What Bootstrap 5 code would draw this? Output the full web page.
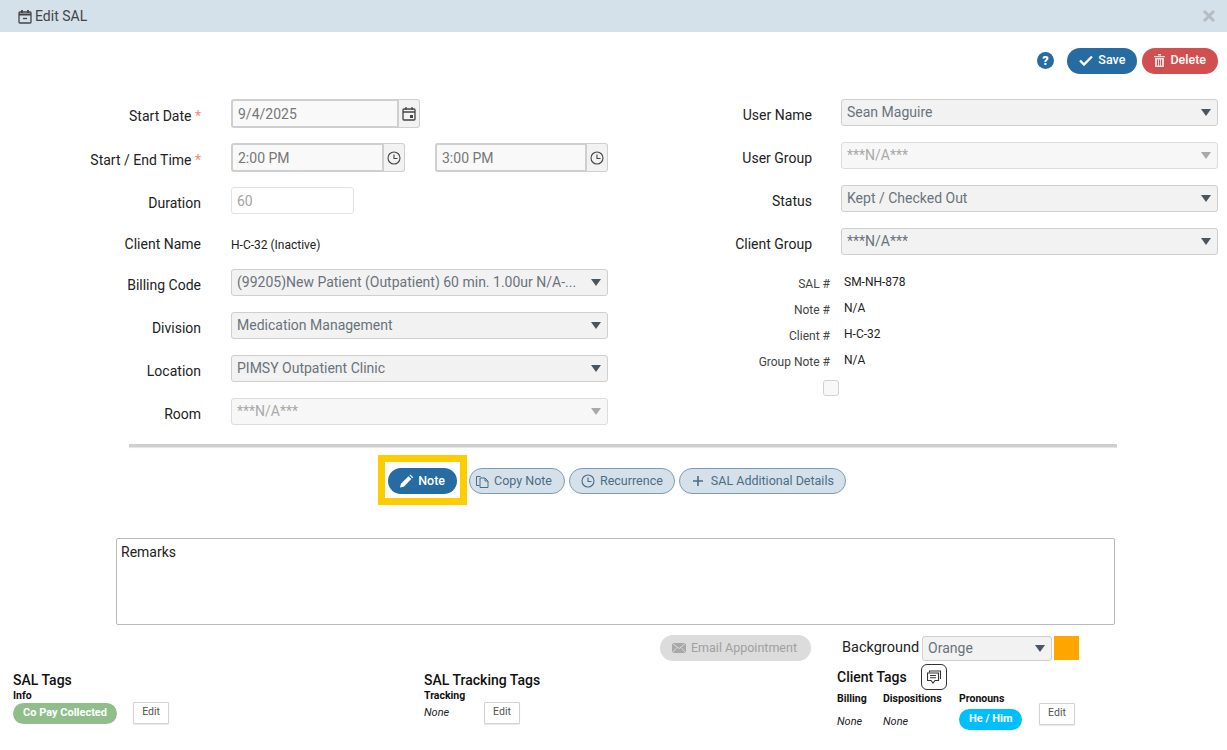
<!DOCTYPE html>
<html lang="en">
  <head>
    <meta charset="UTF-8" />
    <title>Edit SAL</title>
    <link href="https://cdn.jsdelivr.net/npm/bootstrap@5.3.0/dist/css/bootstrap.min.css" rel="stylesheet" />
    <script src="https://cdn.jsdelivr.net/npm/bootstrap@5.3.0/dist/js/bootstrap.bundle.min.js"></script>
    <style>
      body {
        font-family: Roboto, "Liberation Sans", sans-serif;
        font-size: 14px;
        color: #222;
        background: #fff;
        height: 750px;
        overflow: hidden;
      }
      .title-bar {
        height: 32px;
        background: #d4e1ea;
        padding: 0 9px 0 18px;
        color: #444;
        font-size: 14px;
      }
      .title-bar svg { margin-right: 3px; }
      .close-x { color: #b4bcc2; font-size: 0; }
      .tool-bar {
        height: 27px;
        margin-top: 15px;
        padding-right: 9px;
        gap: 5px;
      }
      .pill-btn {
        border-radius: 14px;
        height: 26px;
        padding: 0 11px;
        font-size: 12.5px;
        font-weight: 500;
        border: 1px solid transparent;
        display: inline-flex;
        align-items: center;
        gap: 5px;
        white-space: nowrap;
        line-height: 1;
      }
      .pill-blue { background: #266ba2; color: #fff; }
      .pill-red { background: #d24f4f; color: #fff; }
      .pill-soft { background: #d4e1ea; color: #4c6c85; border-color: #7c9db8; font-weight: 400; }
      .pill-off { background: #dcdcdc; color: #a0a0a0; font-weight: 400; }
      .form-area { margin-top: 25px; height: 345px; }
      .left-side { width: 608px; }
      .right-side { margin-left: 120px; width: 490px; }
      .left-row { display: flex; gap: 30px; margin-bottom: 16px; align-items: center; }
      .left-row .lbl { width: 201px; margin-top: 5px; }
      .right-row { display: flex; gap: 29px; margin-bottom: 16px; align-items: center; }
      .right-row .lbl { width: 84px; margin-top: 6px; }
      .lbl { text-align: right; white-space: nowrap; }
      .req { color: #ef8b80; }
      .field {
        height: 27px;
        font-size: 14px;
        color: #6a737c;
        background-color: #f2f2f2;
        border: 1px solid #cfcfcf;
        border-radius: 3px;
        padding: 0 5px;
      }
      .form-select.field {
        padding: 0 22px 0 5px;
        background-position: right 6px center;
        background-size: 10px 7px;
        background-image: url("data:image/svg+xml,%3csvg xmlns='http://www.w3.org/2000/svg' viewBox='0 0 10 7'%3e%3cpath fill='%23495560' d='M0 0h10L5 7z'/%3e%3c/svg%3e");
      }
      .form-select.field:disabled { background-color: #f7f7f7; color: #a9a9a9; border-color: #ddd; opacity: 1;
        background-image: url("data:image/svg+xml,%3csvg xmlns='http://www.w3.org/2000/svg' viewBox='0 0 10 7'%3e%3cpath fill='%23a9a9a9' d='M0 0h10L5 7z'/%3e%3c/svg%3e");
      }
      .sel-left { width: 377px; }
      .sel-right { width: 377px; }
      .date-group { display: flex; }
      .date-group .field {
        height: 29px;
        border: 2px solid #cfcfcf;
        border-right: 0;
        border-radius: 3px 0 0 3px;
        padding: 0 5px;
        background: #f9f9f9;
        color: #777;
      }
      .add-on {
        width: 23px;
        height: 29px;
        border: 1px solid #cfcfcf;
        border-left: 2px solid #cfcfcf;
        border-radius: 0 3px 3px 0;
        background: #f2f2f2;
        display: flex;
        align-items: center;
        justify-content: center;
        color: #444;
      }
      .dur-input {
        width: 123px;
        background: #fff;
        color: #a5a5a5;
        border-color: #e2e2e2;
      }
      .info-row { display: flex; gap: 14px; height: 26px; font-size: 12px; }
      .info-row .lbl { width: 102px; color: #444; padding-top: 2px; }
      .tick-box { width: 16px; height: 16px; border: 1px solid #d2d2d2; border-radius: 3px; background: #f8f8f8; margin-left: 95px; margin-top: 3px; }
      .divider-line { height: 3px; background: #cfcfcf; margin: 0 110px 0 129px; box-shadow: 0 1px 1px #e4e4e4; }
      .action-row { margin-top: 21px; height: 26px; padding-left: 388px; gap: 4px; position: relative; }
      .note-mark {
        position: absolute;
        left: 378px;
        top: -13px;
        width: 89px;
        height: 50px;
        border: 7px solid #ffcc00;
        pointer-events: none;
      }
      .remarks-box {
        margin: 44px 112px 0 116px;
        height: 87px;
        border: 1px solid #b9b9b9;
        border-radius: 2px;
        padding: 3px 4px;
        color: #222;
      }
      .email-row { margin-top: 10px; height: 26px; padding-left: 660px; }
      .bg-label { margin-left: 31px; margin-right: 3px; font-size: 14.5px; }
      .bg-select { width: 130px; height: 25px; }
      .swatch { width: 25px; height: 24px; background: #ffa500; margin-left: 2px; }
      .tags-row { position: relative; margin-top: 10px; padding-left: 13px; }
      .tag-col { width: 411px; }
      .tag-title { font-size: 14px; font-weight: 500; line-height: 18px; color: #111; }
      .tag-head { font-size: 10.5px; font-weight: 700; line-height: 13px; color: #111; }
      .none-text { font-size: 11px; font-style: italic; color: #222; }
      .tag-pill {
        border-radius: 11px;
        height: 21px;
        padding: 0 10px;
        font-size: 11px;
        font-weight: 700;
        color: #fff;
        display: inline-flex;
        align-items: center;
      }
      .edit-btn {
        height: 22px;
        width: 36px;
        border: 1px solid #d2d2d2;
        background: #fff;
        font-size: 10.5px;
        color: #555;
        padding: 0 0 2px;
        border-radius: 1px;
        box-shadow: 0 1px 1px #e8e8e8;
      }
      .chat-btn {
        width: 26px;
        height: 26px;
        border: 1px solid #333;
        border-radius: 6px;
        background: #fff;
        margin-left: 14px;
        display: flex;
        align-items: center;
        justify-content: center;
        padding: 0;
      }
    </style>
  </head>
  <body>
    <div class="title-bar d-flex align-items-center justify-content-between">
      <div class="d-flex align-items-center">
        <svg width="14" height="15" viewBox="0 0 14 15" fill="none" stroke="#444" stroke-width="1.3"><rect x="1" y="3" width="12" height="11" rx="1" /><path d="M1 5.5h12M4 1v3M10 1v3" stroke-width="1.8" /><path d="M5 9.5h4" /></svg>
        <span>Edit SAL</span>
      </div>
      <svg width="12" height="12" viewBox="0 0 12 12" stroke="#b4bcc2" stroke-width="3"><path d="M1 1l10 10M11 1L1 11" /></svg>
    </div>

    <div class="tool-bar d-flex align-items-center justify-content-end">
      <svg class="me-2" width="17" height="17" viewBox="0 0 17 17"><circle cx="8.5" cy="8.5" r="8.5" fill="#266ba2" /><text x="8.5" y="13" text-anchor="middle" font-family="Roboto, sans-serif" font-weight="900" font-size="12.5" fill="#fff">?</text></svg>
      <button class="pill-btn pill-blue" type="button">
        <svg width="14" height="11" viewBox="0 0 14 11" fill="none" stroke="#fff" stroke-width="2.4"><path d="M1 5.5l4 4 8-8" /></svg>Save
      </button>
      <button class="pill-btn pill-red" type="button">
        <svg width="11" height="13" viewBox="0 0 11 13" fill="#f6dcdc"><path d="M0 2h11v1.2H0zM4 0h3v1.5H4zM1 4h9v9H1zM3 5.5v6h1v-6zm2 0v6h1v-6zm2 0v6h1v-6z" fill-rule="evenodd" /></svg>Delete
      </button>
    </div>

    <div class="form-area d-flex">
      <div class="left-side">
        <div class="left-row" style="margin-bottom: 15px">
          <div class="lbl">Start Date <span class="req">*</span></div>
          <div class="date-group">
            <input class="field" style="width: 166px" value="9/4/2025" />
            <div class="add-on">
              <svg width="14" height="15" viewBox="0 0 14 15" fill="none" stroke="#444" stroke-width="1.3"><rect x="1" y="3" width="12" height="11" rx="1" /><path d="M1 6h12M4 1v3M10 1v3" /><rect x="8" y="9" width="3" height="3" fill="#444" stroke="none" /></svg>
            </div>
          </div>
        </div>
        <div class="left-row" style="margin-bottom: 15px">
          <div class="lbl">Start / End Time <span class="req">*</span></div>
          <div class="date-group">
            <input class="field" style="width: 151px" value="2:00 PM" />
            <div class="add-on">
              <svg width="14" height="14" viewBox="0 0 14 14" fill="none" stroke="#444" stroke-width="1.1"><circle cx="7" cy="7" r="6" /><path d="M7 3.5V7.500h3.500" /></svg>
            </div>
          </div>
          <div class="date-group">
            <input class="field" style="width: 150px" value="3:00 PM" />
            <div class="add-on">
              <svg width="14" height="14" viewBox="0 0 14 14" fill="none" stroke="#444" stroke-width="1.1"><circle cx="7" cy="7" r="6" /><path d="M7 3.5V7.500h3.500" /></svg>
            </div>
          </div>
        </div>
        <div class="left-row" style="margin-bottom: 22px">
          <div class="lbl">Duration</div>
          <input class="field dur-input" value="60" />
        </div>
        <div class="left-row" style="margin-bottom: 16px; height: 17px">
          <div class="lbl" style="margin-top: 0">Client Name</div>
          <div style="font-size: 12px">H-C-32 (Inactive)</div>
        </div>
        <div class="left-row">
          <div class="lbl">Billing Code</div>
          <select class="form-select field sel-left"><option>(99205)New Patient (Outpatient) 60 min. 1.00ur N/A-...</option></select>
        </div>
        <div class="left-row">
          <div class="lbl">Division</div>
          <select class="form-select field sel-left"><option>Medication Management</option></select>
        </div>
        <div class="left-row">
          <div class="lbl">Location</div>
          <select class="form-select field sel-left"><option>PIMSY Outpatient Clinic</option></select>
        </div>
        <div class="left-row">
          <div class="lbl">Room</div>
          <select class="form-select field sel-left" disabled><option>***N/A***</option></select>
        </div>
      </div>

      <div class="right-side">
        <div class="right-row">
          <div class="lbl">User Name</div>
          <select class="form-select field sel-right"><option>Sean Maguire</option></select>
        </div>
        <div class="right-row">
          <div class="lbl">User Group</div>
          <select class="form-select field sel-right" disabled><option>***N/A***</option></select>
        </div>
        <div class="right-row">
          <div class="lbl">Status</div>
          <select class="form-select field sel-right"><option>Kept / Checked Out</option></select>
        </div>
        <div class="right-row" style="margin-bottom: 18px">
          <div class="lbl">Client Group</div>
          <select class="form-select field sel-right"><option>***N/A***</option></select>
        </div>
        <div class="info-row"><div class="lbl">SAL #</div><div>SM-NH-878</div></div>
        <div class="info-row"><div class="lbl">Note #</div><div>N/A</div></div>
        <div class="info-row"><div class="lbl">Client #</div><div>H-C-32</div></div>
        <div class="info-row"><div class="lbl">Group Note #</div><div>N/A</div></div>
        <div class="tick-box"></div>
      </div>
    </div>

    <div class="divider-line"></div>

    <div class="action-row d-flex align-items-center">
      <button class="pill-btn pill-blue" type="button" style="width: 69px; margin-right: 8px">
        <svg width="14" height="14" viewBox="0 0 14 14" fill="#fff"><path d="M0 14l1-4 8-8 3 3-8 8zM10 1l1-1 3 3-1 1z" /></svg>Note
      </button>
      <button class="pill-btn pill-soft" type="button" style="padding-left: 6px; width: 96px">
        <svg width="13" height="13" viewBox="0 0 13 13" fill="none" stroke="#4c6c85" stroke-width="1"><path d="M3.500 10.500h-3v-9h4M4 3h5l3 3v6.500H4zM9 3v3h3" /></svg>Copy Note
      </button>
      <button class="pill-btn pill-soft" type="button" style="padding-left: 11px">
        <svg width="14" height="14" viewBox="0 0 14 14" fill="none" stroke="#4c6c85" stroke-width="1.1"><circle cx="7" cy="7" r="6" /><path d="M7 3.5V7.500h3.500" /></svg>Recurrence
      </button>
      <button class="pill-btn pill-soft" type="button" style="gap: 8px; padding-left: 13px">
        <svg width="10" height="10" viewBox="0 0 10 10" stroke="#4c6c85" stroke-width="1.6"><path d="M5 0v10M0 5h10" /></svg>SAL Additional Details
      </button>
      <div class="note-mark"></div>
    </div>

    <div class="remarks-box">Remarks</div>

    <div class="email-row d-flex align-items-center">
      <button class="pill-btn pill-off" type="button" style="width: 151px; padding-left: 11px">
        <svg width="14" height="10" viewBox="0 0 14 10"><rect width="14" height="10" fill="#a8a8a8" /><path d="M0 0l7 5.500L14 0M0 10l5-5.500M14 10L9 4.500" fill="none" stroke="#dcdcdc" stroke-width="1" /></svg>Email Appointment
      </button>
      <span class="bg-label">Background</span>
      <select class="form-select field bg-select"><option>Orange</option></select>
      <div class="swatch"></div>
    </div>

    <div class="tags-row d-flex">
      <div class="tag-col">
        <div class="tag-title">SAL Tags</div>
        <div class="tag-head">Info</div>
        <div class="d-flex align-items-center gap-3">
          <span class="tag-pill" style="background: #8fbe8b">Co Pay Collected</span>
          <button class="edit-btn" type="button">Edit</button>
        </div>
      </div>
      <div class="tag-col" style="width: 413px">
        <div class="tag-title">SAL Tracking Tags</div>
        <div class="tag-head">Tracking</div>
        <div class="d-flex align-items-center" style="height: 22px">
          <span class="none-text" style="width: 60px">None</span>
          <button class="edit-btn" type="button">Edit</button>
        </div>
      </div>
      <div>
        <div class="d-flex align-items-center" style="height: 26px; margin-top: -7px">
          <div class="tag-title">Client Tags</div>
          <button class="chat-btn" type="button">
            <svg width="14" height="14" viewBox="0 0 14 14" fill="none" stroke="#333" stroke-width="1.1"><path d="M2.500 2.500V1h11v8" /><path d="M.5 3h11v7.500H8L6 13l-2-2.500H.5z" /><path d="M3 5.500h6M3 7.800h6" /></svg>
          </button>
        </div>
        <div class="d-flex" style="margin-top: 2px">
          <div style="width: 46px"><div class="tag-head">Billing</div><div class="none-text" style="margin-top: 9px">None</div></div>
          <div style="width: 76px"><div class="tag-head">Dispositions</div><div class="none-text" style="margin-top: 9px">None</div></div>
          <div style="width: 80px">
            <div class="tag-head">Pronouns</div>
            <span class="tag-pill" style="background: #00bfff; margin-top: 4px">He / Him</span>
          </div>
          <button class="edit-btn" type="button" style="margin-top: 11px">Edit</button>
        </div>
      </div>
    </div>
  </body>
</html>
